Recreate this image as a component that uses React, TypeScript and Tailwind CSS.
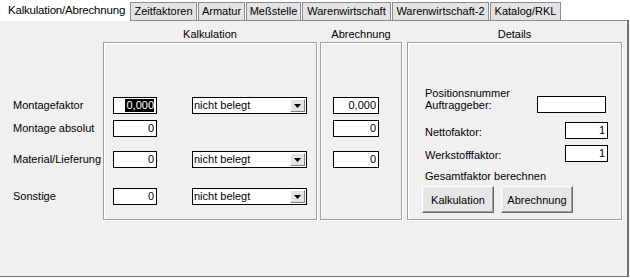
import React from 'react';

const tabs = [
  { label: 'Zeitfaktoren', w: 'w-[67px]' },
  { label: 'Armatur', w: 'w-[47px]' },
  { label: 'Meßstelle', w: 'w-[55px]' },
  { label: 'Warenwirtschaft', w: 'w-[89px]' },
  { label: 'Warenwirtschaft-2', w: 'w-[97px]' },
  { label: 'Katalog/RKL', w: 'w-[71px]' },
];

const rows = [
  { label: 'Montagefaktor', value: '0,000', select: true, abr: '0,000', gap: 'mt-[54px]', selected: true },
  { label: 'Montage absolut', value: '0', select: false, abr: '0', gap: 'mt-[6px]' },
  { label: 'Material/Lieferung', value: '0', select: true, abr: '0', gap: 'mt-[14px]' },
  { label: 'Sonstige', value: '0', select: true, abr: null, gap: 'mt-[20px]' },
];

const groupBox = 'border border-[#a0a0a0] shadow-[inset_1px_1px_0_#fff,1px_1px_0_#fff] h-[178px]';

const Field = ({ value, w, selected }: { value: string; w: string; selected?: boolean }) => (
  <div className={`${w} h-[17px] bg-white border border-black flex items-center justify-end pr-[2px] leading-[13px]`}>
    {selected ? <span className="bg-black text-white pl-[1px]">{value}</span> : value}
  </div>
);

const Combo = () => (
  <div className="w-[115px] h-[17px] bg-white border border-black flex items-center justify-between pl-[1px] pr-[1px] leading-[13px]">
    <span>nicht belegt</span>
    <div className="w-[15px] h-[13px] bg-[#e3e3e3] border border-t-white border-l-white border-r-[#808080] border-b-[#808080] flex items-center justify-center">
      <svg width="7" height="4" viewBox="0 0 7 4">
        <polygon points="0,0 7,0 3.5,4" fill="#000" />
      </svg>
    </div>
  </div>
);

const WinButton = ({ children }: { children: React.ReactNode }) => (
  <button className="w-[72px] h-[27px] bg-[#e6e6e6] border border-t-white border-l-white border-r-[#696969] border-b-[#696969] shadow-[inset_-1px_-1px_0_#a0a0a0] flex items-center justify-center">
    {children}
  </button>
);

export default function App() {
  return (
    <div className="w-[630px] h-[278px] bg-white text-black text-[11px] font-['Liberation_Sans',Arial,sans-serif] overflow-hidden">
      {/* tab strip */}
      <div className="flex items-start h-[20px]">
        <div className="relative z-10 w-[130px] h-[21px] bg-white flex items-center pl-[8px] text-[11.5px] tracking-[-0.2px]">
          Kalkulation/Abrechnung
        </div>
        {tabs.map((t) => (
          <div
            key={t.label}
            className={`${t.w} mt-[2px] mr-[1px] h-[18px] bg-[#e3e3e3] border border-b-0 border-[#898c95] flex items-center justify-center`}
          >
            {t.label}
          </div>
        ))}
      </div>

      {/* tab page */}
      <div className="w-[629px] h-[257px] bg-[#f0f0f0] border-t border-t-[#898c95] border-r-2 border-r-[#6f6f6f] border-b border-b-[#6f6f6f]">
        <div className="flex h-[21px] pt-[7px] leading-[13px]">
          <div className="w-[103px]" />
          <div className="w-[214px] text-center">Kalkulation</div>
          <div className="w-[82px] ml-[3px] text-center">Abrechnung</div>
          <div className="w-[215px] ml-[5px] text-center">Details</div>
        </div>

        <div className="flex">
          {/* row labels */}
          <div className="w-[103px] flex flex-col pl-[13px] pt-[1px]">
            {rows.map((r) => (
              <div key={r.label} className={`${r.gap} h-[17px] flex items-center`}>
                {r.label}
              </div>
            ))}
          </div>

          {/* Kalkulation */}
          <div className={`w-[214px] ${groupBox} flex flex-col pl-[9px]`}>
            {rows.map((r) => (
              <div key={r.label} className={`${r.gap} flex items-center`}>
                <Field value={r.value} w="w-[44px]" selected={r.selected} />
                {r.select && (
                  <div className="ml-[35px]">
                    <Combo />
                  </div>
                )}
              </div>
            ))}
          </div>

          {/* Abrechnung */}
          <div className={`w-[82px] ml-[3px] ${groupBox} flex flex-col pl-[12px]`}>
            {rows
              .filter((r) => r.abr !== null)
              .map((r) => (
                <div key={r.label} className={r.gap}>
                  <Field value={r.abr as string} w="w-[46px]" />
                </div>
              ))}
          </div>

          {/* Details */}
          <div className={`w-[215px] ml-[5px] ${groupBox} flex flex-col pl-[17px] pt-[44px] leading-[12px]`}>
            <div className="flex items-start h-[24px]">
              <div className="w-[112px]">
                Positionsnummer
                <br />
                Auftraggeber:
              </div>
              <div className="mt-[9px]">
                <Field value="" w="w-[69px]" />
              </div>
            </div>
            <div className="flex items-end mt-[11px]">
              <div className="w-[140px] pb-[1px]">Nettofaktor:</div>
              <Field value="1" w="w-[43px]" />
            </div>
            <div className="flex items-end mt-[6px]">
              <div className="w-[140px] pb-[1px]">Werkstofffaktor:</div>
              <Field value="1" w="w-[43px]" />
            </div>
            <div className="mt-[8px]">Gesamtfaktor berechnen</div>
            <div className="flex gap-[7px] mt-[4px] ml-[-3px]">
              <WinButton>Kalkulation</WinButton>
              <WinButton>Abrechnung</WinButton>
            </div>
          </div>
        </div>
      </div>
    </div>
  );
}
